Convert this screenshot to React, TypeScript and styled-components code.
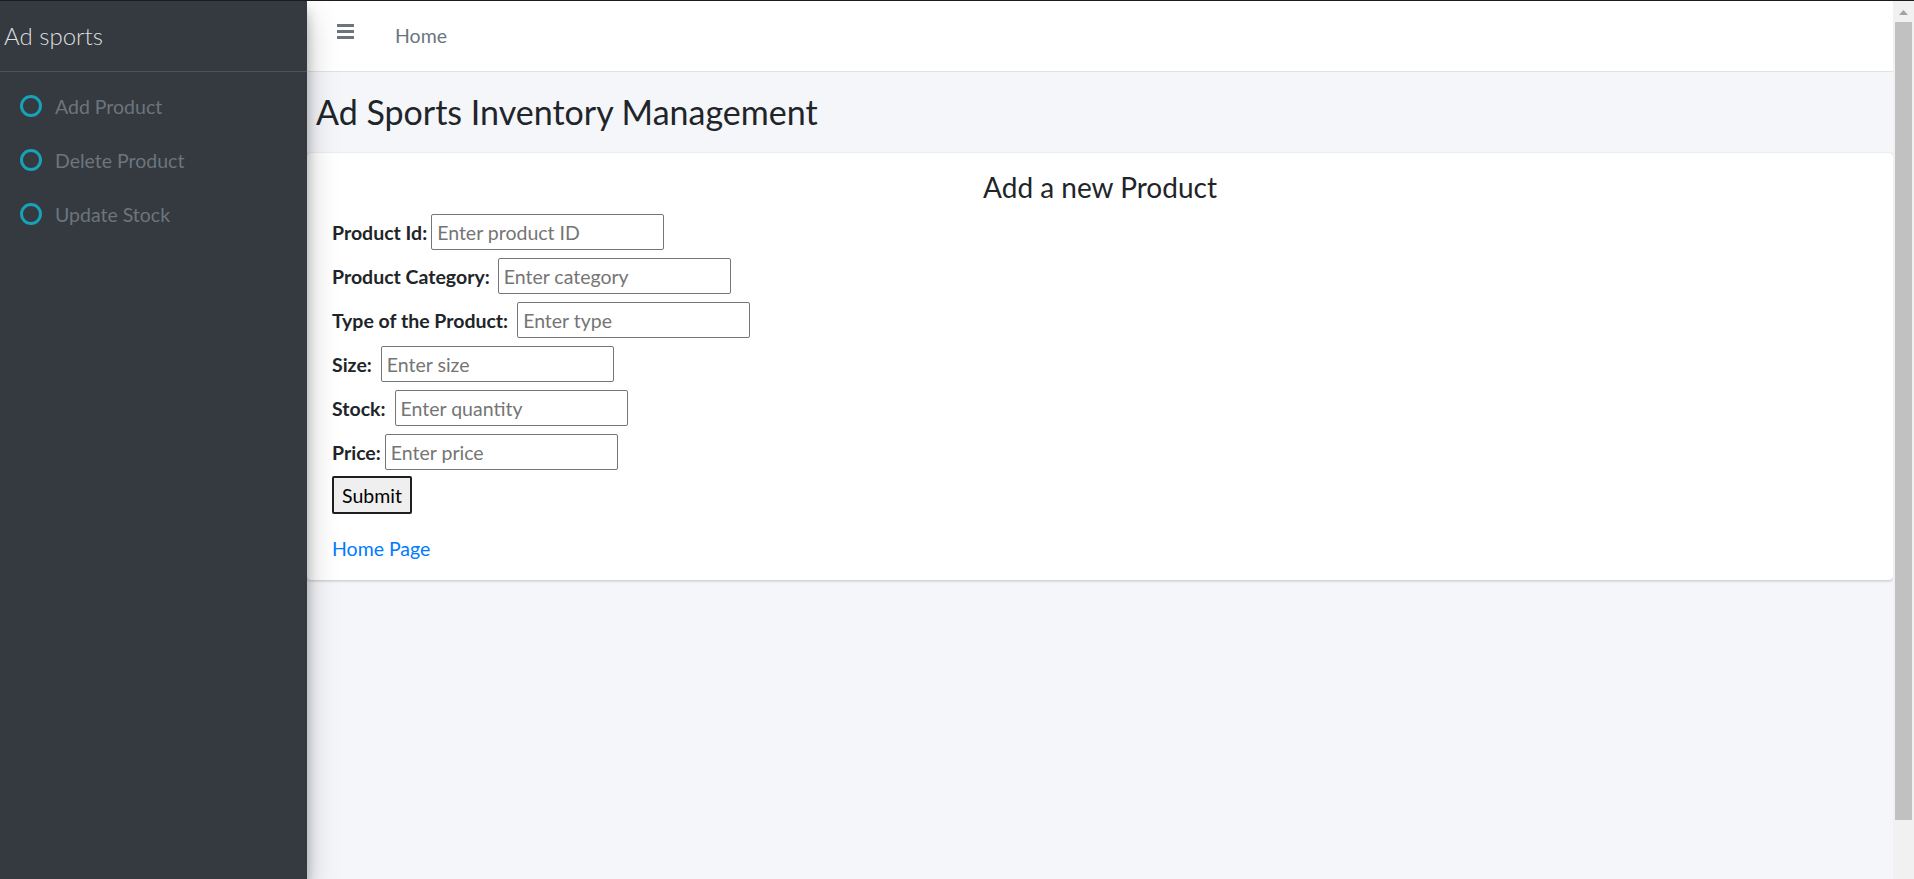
import React from "react";
import styled, { createGlobalStyle } from "styled-components";

const GlobalStyle = createGlobalStyle`
  html, body { margin: 0; padding: 0; height: 100%; overflow: hidden; }
  body { font-family: Lato, "Liberation Sans", sans-serif; background: #f4f6f9; color: #212529; }
  * { box-sizing: border-box; }
`;

const Frame = styled.div`
  height: 100vh;
  border-top: 1px solid #1c1c1c;
  display: flex;
  overflow: hidden;
`;

const Layout = styled.div`
  flex: 1;
  display: grid;
  grid-template-columns: 307px 1fr;
  min-height: 100%;
`;

const ScrollRail = styled.div`
  width: 21px;
  flex: none;
  background: #f1f1f1;
  display: flex;
  flex-direction: column;
  align-items: center;
`;

const ScrollArrow = styled.div`
  height: 21px;
  width: 100%;
  display: flex;
  justify-content: center;
  padding-top: 9px;
`;

const ScrollThumb = styled.div`
  width: 17px;
  height: 798px;
  background: #c1c1c1;
`;

const Sidebar = styled.aside`
  background: #343a40;
  position: relative;
  z-index: 2;
  box-shadow: 0 14px 28px rgba(0, 0, 0, 0.25), 0 10px 10px rgba(0, 0, 0, 0.22);
`;

const Brand = styled.div`
  height: 71px;
  display: flex;
  align-items: center;
  padding-left: 4px;
  padding-bottom: 2px;
  border-bottom: 1px solid #4b545c;
  font-size: 24px;
  font-weight: 300;
  color: rgba(255, 255, 255, 0.85);
`;

const Nav = styled.nav`
  display: flex;
  flex-direction: column;
  padding-top: 7px;
`;

const NavItem = styled.a`
  display: flex;
  align-items: center;
  height: 54px;
  padding-left: 20px;
  gap: 13px;
  color: #6c757d;
  font-size: 19.5px;
  text-decoration: none;
`;

const Ring = styled.span`
  width: 22px;
  height: 22px;
  border-radius: 50%;
  border: 3px solid #17a2b8;
  flex: none;
`;

const Main = styled.div`
  display: flex;
  flex-direction: column;
  background: #f4f6f9;
`;

const Header = styled.header`
  height: 71px;
  background: #fff;
  border-bottom: 1px solid #dee2e6;
  display: flex;
  align-items: center;
  padding-left: 30px;
  padding-bottom: 2px;
`;

const Burger = styled.span`
  width: 17px;
  height: 15px;
  display: flex;
  flex-direction: column;
  justify-content: space-between;
  margin-top: -8px;
  span { height: 3px; background: #6c757d; display: block; }
`;

const HeaderLink = styled.a`
  margin-left: 41px;
  color: #6c757d;
  font-size: 19.5px;
  text-decoration: none;
`;

const Title = styled.h1`
  margin: 0;
  padding: 19px 0 0 9px;
  height: 81px;
  font-size: 34px;
  font-weight: 400;
  line-height: 42px;
  color: #212529;
`;

const Card = styled.section`
  background: #fff;
  border-radius: 4px;
  box-shadow: 0 0 1px rgba(0, 0, 0, 0.125), 0 1px 3px rgba(0, 0, 0, 0.2);
  padding: 14px 25px 17px;
`;

const CardTitle = styled.h2`
  margin: 0 0 7px;
  text-align: center;
  font-size: 28px;
  font-weight: 400;
  line-height: 40px;
  color: #212529;
`;

const Form = styled.form`
  display: flex;
  flex-direction: column;
  align-items: flex-start;
  gap: 8px;
`;

const Row = styled.div<{ $gap: number }>`
  display: flex;
  align-items: center;
  gap: ${(p) => p.$gap}px;
`;

const Label = styled.label`
  font-weight: 700;
  font-size: 19.5px;
  color: #212529;
`;

const Input = styled.input`
  width: 233px;
  height: 36px;
  border: 1px solid #767676;
  border-radius: 2px;
  padding: 0 5px;
  font-family: inherit;
  font-size: 19.5px;
  color: #212529;
  &::placeholder { color: #757575; }
`;

const SubmitButton = styled.button`
  height: 38px;
  width: 80px;
  margin-top: -2px;
  background: #efefef;
  border: 2px solid #1f1f1f;
  border-radius: 2px;
  font-family: inherit;
  font-size: 19.5px;
  color: #000;
  padding: 0;
`;

const HomeLink = styled.a`
  display: block;
  margin-top: 20px;
  line-height: 29px;
  color: #007bff;
  font-size: 19.5px;
  text-decoration: none;
`;

const fields = [
  { label: "Product Id:", placeholder: "Enter product ID", gap: 4 },
  { label: "Product Category:", placeholder: "Enter category", gap: 8 },
  { label: "Type of the Product:", placeholder: "Enter type", gap: 9 },
  { label: "Size:", placeholder: "Enter size", gap: 9 },
  { label: "Stock:", placeholder: "Enter quantity", gap: 9 },
  { label: "Price:", placeholder: "Enter price", gap: 4 },
];

export default function App() {
  return (
    <>
      <GlobalStyle />
      <Frame>
        <Layout>
          <Sidebar>
            <Brand>Ad sports</Brand>
            <Nav>
              {["Add Product", "Delete Product", "Update Stock"].map((t) => (
                <NavItem key={t} href="#">
                  <Ring />
                  {t}
                </NavItem>
              ))}
            </Nav>
          </Sidebar>
          <Main>
            <Header>
              <Burger>
                <span />
                <span />
                <span />
              </Burger>
              <HeaderLink href="#">Home</HeaderLink>
            </Header>
            <Title>Ad Sports Inventory Management</Title>
            <Card>
              <CardTitle>Add a new Product</CardTitle>
              <Form onSubmit={(e) => e.preventDefault()}>
                {fields.map((f) => (
                  <Row key={f.label} $gap={f.gap}>
                    <Label>{f.label}</Label>
                    <Input placeholder={f.placeholder} />
                  </Row>
                ))}
                <SubmitButton type="submit">Submit</SubmitButton>
              </Form>
              <HomeLink href="#">Home Page</HomeLink>
            </Card>
          </Main>
        </Layout>
        <ScrollRail>
          <ScrollArrow>
            <svg width="9" height="5" viewBox="0 0 9 5">
              <path d="M4.5 0 L9 5 L0 5 Z" fill="#a3a3a3" />
            </svg>
          </ScrollArrow>
          <ScrollThumb />
        </ScrollRail>
      </Frame>
    </>
  );
}
